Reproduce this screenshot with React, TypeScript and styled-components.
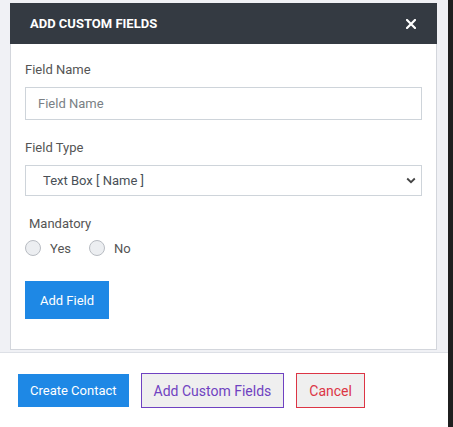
import * as React from 'react';
import styled, { createGlobalStyle } from 'styled-components';

const GlobalStyle = createGlobalStyle`
  html, body {
    margin: 0;
    padding: 0;
    background: #ffffff;
  }
  body {
    font-family: Roboto, "Liberation Sans", Arial, sans-serif;
  }
  * {
    box-sizing: border-box;
  }
`;

export default () => {
  return (
    <>
      <GlobalStyle />
      <Page>
        <Main>
          <Backdrop>
            <Modal>
              <Header>
                <Title>ADD CUSTOM FIELDS</Title>
                <Close>
                  <svg width="10" height="10" viewBox="0 0 10 10">
                    <path d="M1 1 L9 9 M9 1 L1 9" stroke="#fff" strokeWidth="2.2" strokeLinecap="square" />
                  </svg>
                </Close>
              </Header>
              <Body>
                <Group>
                  <Label>Field Name</Label>
                  <Input placeholder="Field Name" />
                </Group>
                <Group>
                  <Label>Field Type</Label>
                  <SelectWrap>
                    <Select defaultValue="name">
                      <option value="name">Text Box [ Name ]</option>
                    </Select>
                    <Chevron width="10" height="7" viewBox="0 0 10 7">
                      <path d="M1.2 1.5 L5 5.2 L8.8 1.5" fill="none" stroke="#444" strokeWidth="1.8" />
                    </Chevron>
                  </SelectWrap>
                </Group>
                <Group>
                  <Label indent>Mandatory</Label>
                  <Radios>
                    <RadioLabel>
                      <Radio />
                      Yes
                    </RadioLabel>
                    <RadioLabel>
                      <Radio />
                      No
                    </RadioLabel>
                  </Radios>
                </Group>
                <PrimaryButton small={false}>Add Field</PrimaryButton>
              </Body>
            </Modal>
          </Backdrop>
          <Footer>
            <PrimaryButton small>Create Contact</PrimaryButton>
            <OutlineButton color="#6f42c1">Add Custom Fields</OutlineButton>
            <OutlineButton color="#dc3545">Cancel</OutlineButton>
          </Footer>
        </Main>
        <Edge />
      </Page>
    </>
  );
};

const Page = styled.div`
  display: flex;
  width: 453px;
  height: 427px;
`;
const Main = styled.div`
  flex: 1;
  display: flex;
  flex-direction: column;
`;
const Edge = styled.div`
  width: 5px;
  background: #1f1f1f;
`;
const Backdrop = styled.div`
  background: #f0f1f5;
  padding: 3px 11px 2px 10px;
  border-bottom: 1px solid #dde0e6;
`;
const Modal = styled.div`
  background: #fff;
  border: 1px solid #d3d6dc;
  border-top: none;
`;
const Header = styled.div`
  display: flex;
  align-items: center;
  justify-content: space-between;
  height: 41px;
  margin: 0 -1px;
  padding: 0 21px 0 20px;
  background: #343a42;
`;
const Title = styled.h3`
  margin: 0;
  color: #fff;
  font-size: 13px;
  font-weight: bold;
`;
const Close = styled.span`
  display: flex;
`;
const Body = styled.div`
  padding: 18px 14px 30px 14px;
`;
const Group = styled.div`
  margin-bottom: 20px;
`;
const Label = styled.div<{ indent?: boolean }>`
  font-size: 13px;
  color: #555;
  margin-bottom: 10px;
  padding-left: ${(p) => (p.indent ? '4px' : '0')};
`;
const Input = styled.input`
  display: block;
  width: 100%;
  height: 33px;
  padding: 0 12px;
  border: 1px solid #ced4da;
  border-radius: 0;
  font-family: inherit;
  font-size: 13px;
  color: #495057;
  &::placeholder {
    color: #7a7f85;
  }
`;
const SelectWrap = styled.div`
  position: relative;
`;
const Select = styled.select`
  display: block;
  width: 100%;
  height: 31px;
  padding: 0 17px;
  border: 1px solid #ced4da;
  border-radius: 0;
  background: #fff;
  appearance: none;
  font-family: inherit;
  font-size: 13px;
  color: #495057;
`;
const Chevron = styled.svg`
  position: absolute;
  right: 6px;
  top: 12px;
  pointer-events: none;
`;
const Radios = styled.div`
  display: flex;
  gap: 18px;
  margin-top: -1px;
`;
const RadioLabel = styled.label`
  display: flex;
  align-items: center;
  gap: 9px;
  font-size: 13px;
  color: #555;
`;
const Radio = styled.span`
  width: 16px;
  height: 16px;
  border-radius: 50%;
  border: 1px solid #b8bcc2;
  background: #eceef1;
`;
const PrimaryButton = styled.button<{ small: boolean }>`
  height: ${(p) => (p.small ? '33px' : '38px')};
  padding: 0 ${(p) => (p.small ? '12px' : '15px')};
  border: none;
  border-radius: 0;
  background: #1e88e5;
  color: #fff;
  font-family: inherit;
  font-size: 13px;
  margin-top: ${(p) => (p.small ? '1px' : '5px')};
`;
const Footer = styled.div`
  flex: 1;
  display: flex;
  align-items: flex-start;
  gap: 12px;
  padding: 20px 0 0 18px;
  background: #fff;
`;
const OutlineButton = styled.button<{ color: string }>`
  height: 35px;
  padding: 0 12px;
  border: 1px solid ${(p) => p.color};
  border-radius: 0;
  background: #efefef;
  color: ${(p) => p.color};
  font-family: inherit;
  font-size: 14px;
`;
